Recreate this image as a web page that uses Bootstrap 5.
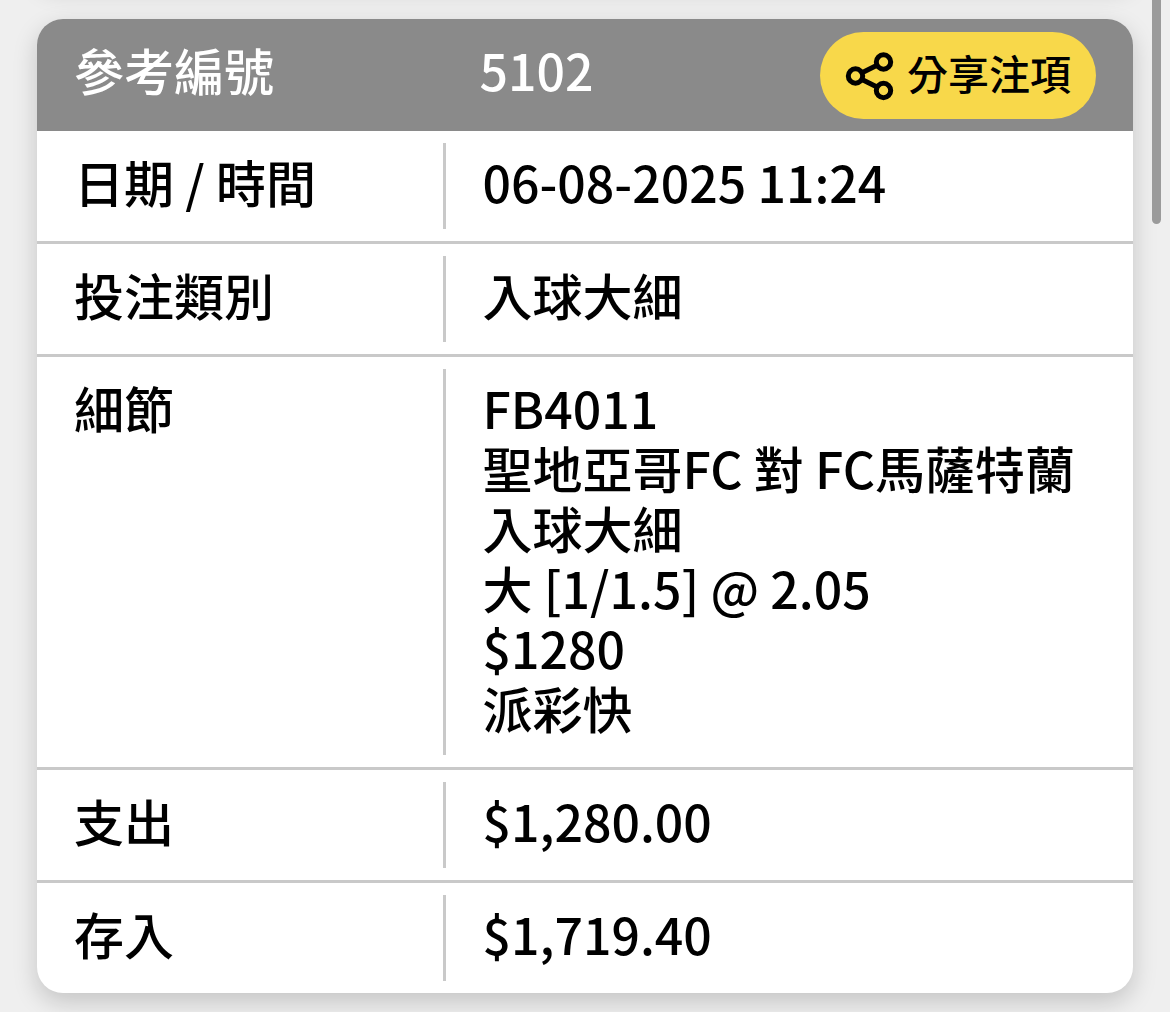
<!DOCTYPE html>
<html lang="zh-Hant">
<head>
<meta charset="utf-8">
<meta name="viewport" content="width=device-width, initial-scale=1">
<title>投注紀錄</title>
<link href="https://cdn.jsdelivr.net/npm/bootstrap@5.3.0/dist/css/bootstrap.min.css" rel="stylesheet">
<style>
  body {
    background: #efefef;
    color: #000;
    font-family: "Noto Sans CJK TC", "Noto Sans", sans-serif;
    font-size: 50px;
    font-weight: 500;
    line-height: 60px;
  }
  .page-wrap { padding: 19px 37px; }
  .bet-card {
    border-radius: 26px;
    background: #fff;
    box-shadow: 0 9px 24px rgba(0, 0, 0, .18);
  }
  /* tail of the preceding record, scrolled out above the window */
  .bet-card-prev { height: 40px; margin-top: -78px; margin-bottom: 38px; }
  .bet-table { table-layout: fixed; border-collapse: separate; border-spacing: 0; }
  .bet-table th, .bet-table td { padding: 0; font-weight: 500; vertical-align: top; }
  .bet-table .col-label { width: 37%; }
  .bet-table thead th { background: #8a8a8a; color: #fff; height: 112px; }
  .bet-table tbody tr + tr > * { border-top: 3px solid #c9c9c9; }
  .cell-label { padding: 20px 0 0 37px; }
  .cell-value { margin: 12px 0; padding: 8px 0 18px 37px; border-left: 3px solid #c9c9c9; }
  .head-cell { padding: 13px 37px 0; }
  .head-text { padding-top: 7px; }
  .btn-share {
    --bs-btn-bg: #f8d84a;
    --bs-btn-color: #000;
    --bs-btn-border-width: 0;
    --bs-btn-hover-bg: #f2cf36;
    --bs-btn-hover-color: #000;
    --bs-btn-active-bg: #e8c42a;
    --bs-btn-padding-x: 25px;
    --bs-btn-padding-y: 0;
    --bs-btn-font-size: 41px;
    --bs-btn-font-weight: 500;
    height: 87px;
    gap: 12px;
  }
  .share-label { line-height: 60px; padding-bottom: 8px; }
  .scroll-thumb {
    top: -8px;
    right: 9px;
    width: 9px;
    height: 232px;
    border-radius: 5px;
    background: #9b9b9b;
  }
</style>
</head>
<body class="overflow-hidden">
<main class="page-wrap">
  <div class="bet-card bet-card-prev"></div>
  <section class="bet-card overflow-hidden">
    <table class="bet-table w-100">
      <colgroup><col class="col-label"><col></colgroup>
      <thead>
        <tr>
          <th scope="col"><div class="head-cell"><div class="head-text">參考編號</div></div></th>
          <th scope="col">
            <div class="head-cell d-flex justify-content-between align-items-start">
              <div class="head-text">5102</div>
              <button type="button" class="btn btn-share rounded-pill d-inline-flex align-items-center flex-shrink-0 text-nowrap">
                <svg width="50" height="50" viewBox="0 0 50 50" fill="none" stroke="#000" stroke-width="5" aria-hidden="true">
                  <circle cx="10.500" cy="25" r="7.2"/>
                  <circle cx="38.500" cy="11" r="7.2"/>
                  <circle cx="38.500" cy="39.500" r="7.2"/>
                  <path d="M17 21.700 32 14.200M17 28.500 32 36"/>
                </svg>
                <span class="share-label">分享注項</span>
              </button>
            </div>
          </th>
        </tr>
      </thead>
      <tbody>
        <tr>
          <th scope="row"><div class="cell-label">日期 / 時間</div></th>
          <td><div class="cell-value">06-08-2025 11:24</div></td>
        </tr>
        <tr>
          <th scope="row"><div class="cell-label">投注類別</div></th>
          <td><div class="cell-value">入球大細</div></td>
        </tr>
        <tr>
          <th scope="row"><div class="cell-label">細節</div></th>
          <td>
            <div class="cell-value">
              <div>FB4011</div>
              <div>聖地亞哥FC 對 FC馬薩特蘭</div>
              <div>入球大細</div>
              <div>大 [1/1.5] @ 2.05</div>
              <div>$1280</div>
              <div>派彩快</div>
            </div>
          </td>
        </tr>
        <tr>
          <th scope="row"><div class="cell-label">支出</div></th>
          <td><div class="cell-value">$1,280.00</div></td>
        </tr>
        <tr>
          <th scope="row"><div class="cell-label">存入</div></th>
          <td><div class="cell-value">$1,719.40</div></td>
        </tr>
      </tbody>
    </table>
  </section>
</main>
<div class="scroll-thumb position-fixed" aria-hidden="true"></div>
<script src="https://cdn.jsdelivr.net/npm/bootstrap@5.3.0/dist/js/bootstrap.bundle.min.js"></script>
</body>
</html>
